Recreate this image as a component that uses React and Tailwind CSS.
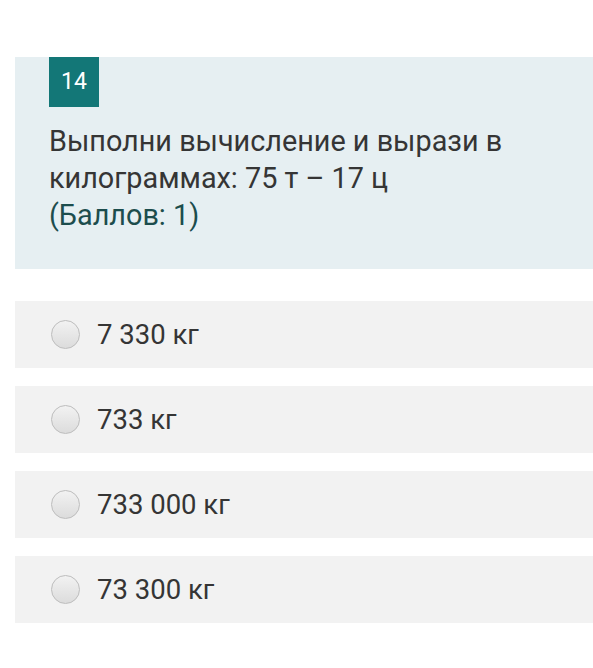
export default function App() {
  const options = ["7 330 кг", "733 кг", "733 000 кг", "73 300 кг"];
  return (
    <div className="w-[593px] h-[668px] bg-white overflow-hidden" style={{ fontFamily: "Roboto, 'Noto Sans', sans-serif" }}>
      <div className="pt-[57px] pl-[15px]">
        <div className="bg-[#e6eff2] h-[212px] pl-[34px]">
          <div className="w-[50px] h-[50px] bg-[#137777] text-white text-[23px] flex items-center justify-center">14</div>
          <div className="mt-[16px] text-[28.8px] leading-[37px] text-[#353535]">
            Выполни вычисление и вырази в
            <br />
            килограммах: 75 т – 17 ц
            <br />
            <span className="text-[#1c4d4d]">(Баллов: 1)</span>
          </div>
        </div>
        <div className="mt-[32px] flex flex-col gap-[18px]">
          {options.map((o) => (
            <div key={o} className="h-[67px] bg-[#f2f2f2] flex items-center pl-[36px]">
              <div className="w-[29px] h-[29px] rounded-full border border-[#bdbdbd] bg-gradient-to-b from-[#f2f2f2] to-[#dcdcdc]" />
              <span className="ml-[17px] text-[27.5px] text-[#353535]">{o}</span>
            </div>
          ))}
        </div>
      </div>
    </div>
  );
}
